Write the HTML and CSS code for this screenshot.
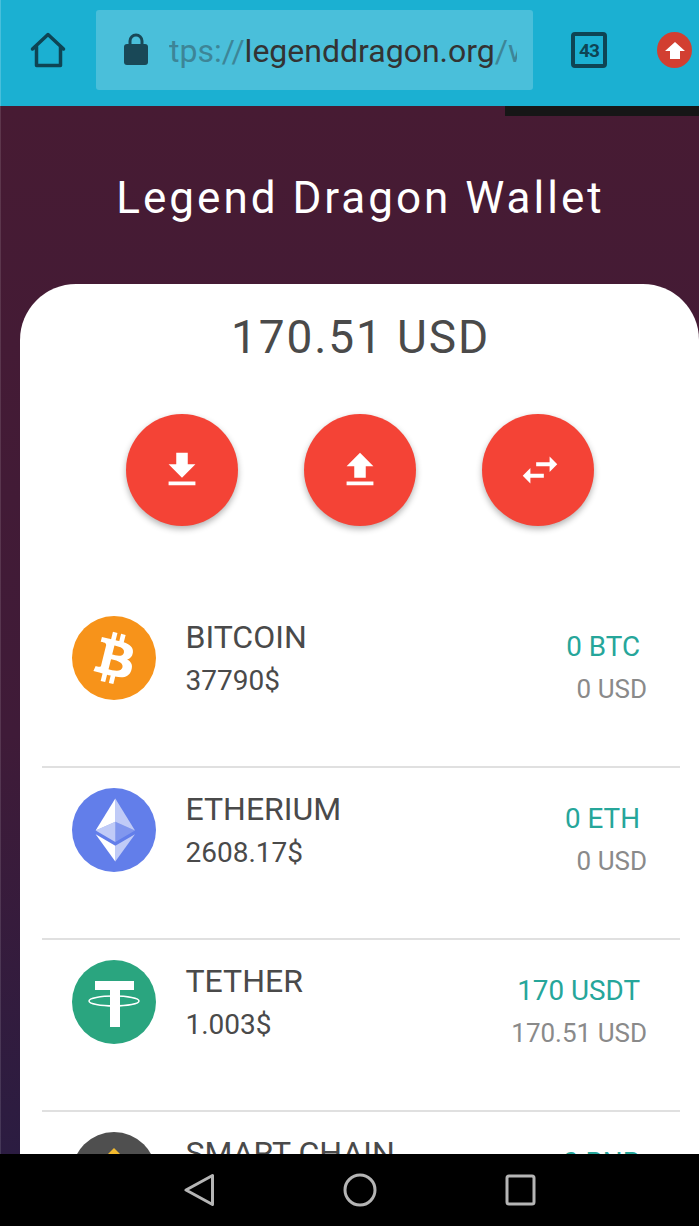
FILE: index.html
```html
<!DOCTYPE html>
<html lang="en">
<head>
    <meta charset="UTF-8">
    <title>Legend Dragon Wallet</title>
    <link rel="stylesheet" href="styles.css">
</head>
<body>
    <div class="phone">
        <header class="toolbar">
            <svg class="home-icon" viewBox="0 0 36 36">
                <path d="M2.500 17 18 2.500 33.500 17M6.500 14.500V33.500H30.500V14.500" fill="none" stroke="#0e4454" stroke-width="3.500" stroke-linejoin="round" stroke-linecap="round"/>
            </svg>
            <div class="url-box">
                <svg class="lock-icon" viewBox="0 0 24 32">
                    <path d="M6 12V8a6 6 0 0 1 12 0V12" fill="none" stroke="#194857" stroke-width="3"/>
                    <rect x="0" y="11" width="24" height="21" rx="3" fill="#194857"/>
                </svg>
                <div class="url-text"><span class="url-dim">tps://</span>legenddragon.org<span class="url-dim">/wallet</span></div>
            </div>
            <div class="tab-count">43</div>
            <div class="update-badge">
                <svg viewBox="0 0 20 17" class="update-arrow"><path d="M10 0 20 9H15V17H5V9H0z" fill="#fff"/></svg>
            </div>
        </header>

        <main class="page">
            <div class="top-strip"></div>
            <h1 class="title">Legend Dragon Wallet</h1>

            <section class="card">
                <div class="total">170.51 USD</div>

                <div class="actions">
                    <button class="round-btn">
                        <svg viewBox="0 0 24 24"><path d="M19 9h-4V3H9v6H5l7 7 7-7zM5 18v2h14v-2H5z"/></svg>
                    </button>
                    <button class="round-btn">
                        <svg viewBox="0 0 24 24"><path d="M9 16h6v-6h4l-7-7-7 7h4zm-4 2h14v2H5z"/></svg>
                    </button>
                    <button class="round-btn swap-btn">
                        <svg viewBox="0 0 24 24"><path d="M6.990 11 3 15l3.990 4v-3H14v-2H6.990v-3zM21 9l-4-4v3h-7v2h7v3l4-4z"/></svg>
                    </button>
                </div>

                <ul class="coins">
                    <li class="coin">
                        <svg class="coin-icon" viewBox="0 0 32 32">
                            <circle cx="16" cy="16" r="16" fill="#f7931a"/>
                            <path fill="#fff" d="M23.189 14.020c.314-2.096-1.283-3.223-3.465-3.975l.708-2.840-1.728-.430-.690 2.765c-.454-.114-.920-.220-1.385-.326l.695-2.783L15.596 6l-.708 2.839c-.376-.086-.746-.170-1.104-.260l.002-.009-2.384-.595-.460 1.846s1.283.294 1.256.312c.700.175.826.638.805 1.006l-.806 3.235c.048.012.110.030.180.057l-.183-.045-1.130 4.532c-.086.212-.303.531-.793.410.018.025-1.256-.313-1.256-.313l-.858 1.978 2.250.561c.418.105.828.215 1.231.318l-.715 2.872 1.727.430.708-2.840c.472.127.930.245 1.378.357l-.706 2.828 1.728.430.715-2.866c2.948.558 5.164.333 6.097-2.333.752-2.146-.037-3.385-1.588-4.192 1.130-.260 1.980-1.003 2.207-2.538zm-3.950 5.538c-.533 2.147-4.148.986-5.320.695l.950-3.805c1.172.293 4.929.872 4.370 3.110zm.535-5.569c-.487 1.953-3.495.960-4.470.717l.860-3.450c.975.243 4.118.696 3.610 2.733z"/>
                        </svg>
                        <div class="coin-info">
                            <div class="coin-name">BITCOIN</div>
                            <div class="coin-price">37790$</div>
                        </div>
                        <div class="coin-amounts">
                            <div class="coin-balance">0 BTC</div>
                            <div class="coin-usd">0 USD</div>
                        </div>
                    </li>
                    <li class="coin">
                        <svg class="coin-icon" viewBox="0 0 32 32">
                            <circle cx="16" cy="16" r="16" fill="#627eea"/>
                            <g fill="#fff">
                                <path fill-opacity=".6" d="M16.498 4v8.870l7.497 3.350z"/>
                                <path d="M16.498 4 9 16.220l7.498-3.350z"/>
                                <path fill-opacity=".6" d="M16.498 21.968v6.027L24 17.616z"/>
                                <path d="M16.498 27.995v-6.028L9 17.616z"/>
                                <path fill-opacity=".2" d="m16.498 20.573 7.497-4.353-7.497-3.348z"/>
                                <path fill-opacity=".6" d="m9 16.220 7.498 4.353v-7.701z"/>
                            </g>
                        </svg>
                        <div class="coin-info">
                            <div class="coin-name">ETHERIUM</div>
                            <div class="coin-price">2608.17$</div>
                        </div>
                        <div class="coin-amounts">
                            <div class="coin-balance">0 ETH</div>
                            <div class="coin-usd">0 USD</div>
                        </div>
                    </li>
                    <li class="coin">
                        <svg class="coin-icon" viewBox="0 0 84 84">
                            <circle cx="42" cy="42" r="42" fill="#2aa57f"/>
                            <path fill="#fff" d="M23 21h39v9H48v37H38V30H23z"/>
                            <ellipse cx="42" cy="41" rx="25" ry="5" fill="none" stroke="#fff" stroke-width="1.500"/>
                        </svg>
                        <div class="coin-info">
                            <div class="coin-name">TETHER</div>
                            <div class="coin-price">1.003$</div>
                        </div>
                        <div class="coin-amounts">
                            <div class="coin-balance">170 USDT</div>
                            <div class="coin-usd">170.51 USD</div>
                        </div>
                    </li>
                    <li class="coin">
                        <svg class="coin-icon" viewBox="0 0 84 84">
                            <circle cx="42" cy="42" r="42" fill="#4f4f4f"/>
                            <path fill="#f3ba2f" d="M42 16 55 29 42 42 29 29z"/>
                        </svg>
                        <div class="coin-info">
                            <div class="coin-name">SMART CHAIN</div>
                            <div class="coin-price">0$</div>
                        </div>
                        <div class="coin-amounts">
                            <div class="coin-balance">0 BNB</div>
                            <div class="coin-usd">0 USD</div>
                        </div>
                    </li>
                </ul>
            </section>
        </main>

        <nav class="navbar">
            <svg class="nav-icon" viewBox="0 0 31 34">
                <path d="M28.500 2.500v29L2 17z" fill="none" stroke="#b5b5b5" stroke-width="3" stroke-linejoin="round"/>
            </svg>
            <svg class="nav-icon nav-circle" viewBox="0 0 34 34">
                <circle cx="17" cy="17" r="15" fill="none" stroke="#b5b5b5" stroke-width="3"/>
            </svg>
            <svg class="nav-icon" viewBox="0 0 31 34">
                <rect x="2" y="3" width="27" height="28" rx="2" fill="none" stroke="#b5b5b5" stroke-width="3"/>
            </svg>
        </nav>
    </div>
</body>
</html>
```

FILE: styles.css
```css
* {
    box-sizing: border-box;
}

body {
    margin: 0;
    font-family: Roboto, "Liberation Sans", sans-serif;
    background-color: #000;
}

.phone {
    display: flex;
    flex-direction: column;
    width: 699px;
    height: 1226px;
    overflow: hidden;
}

.toolbar {
    display: flex;
    align-items: center;
    flex: 0 0 106px;
    padding: 0 7px 6px 30px;
    background-color: #1bb0d2;
    box-shadow: inset 1px 0 rgba(255, 255, 255, 0.2);
}

.home-icon {
    width: 36px;
    height: 36px;
}

.url-box {
    display: flex;
    align-items: center;
    width: 437px;
    height: 80px;
    margin-left: 30px;
    padding: 0 16px 0 28px;
    background-color: #4abfda;
    border-radius: 3px;
}

.lock-icon {
    flex: none;
    width: 24px;
    height: 32px;
    margin-bottom: 2px;
}

.url-text {
    margin-left: 21px;
    padding-top: 2px;
    overflow: hidden;
    white-space: nowrap;
    font-size: 32px;
    color: #333;
}

.url-dim {
    color: #3d8597;
}

.tab-count {
    display: flex;
    align-items: center;
    justify-content: center;
    flex: none;
    width: 36px;
    height: 36px;
    margin-left: 38px;
    border: 4px solid #0e4454;
    border-radius: 4px;
    font-size: 19px;
    font-weight: 700;
    letter-spacing: -1px;
    color: #0e4454;
}

.update-badge {
    display: flex;
    align-items: center;
    justify-content: center;
    flex: none;
    width: 35px;
    height: 36px;
    margin-left: auto;
    background-color: #d23f31;
    border-radius: 50%;
}

.update-arrow {
    width: 20px;
    height: 17px;
}

.page {
    position: relative;
    flex: 1;
    min-height: 0;
    overflow: hidden;
    padding-left: 20px;
    background: linear-gradient(180deg, #471b33 0%, #3f1b38 60%, #2b1c41 100%);
    box-shadow: inset 1px 0 rgba(255, 255, 255, 0.12);
}

.top-strip {
    position: absolute;
    top: 0;
    right: 0;
    width: 194px;
    height: 10px;
    background-color: #161616;
}

.title {
    margin: 0;
    padding: 65px 0 0 2px;
    height: 178px;
    text-align: center;
    font-size: 44px;
    font-weight: 400;
    line-height: 54px;
    letter-spacing: 3px;
    color: #fff;
}

.card {
    padding-top: 26px;
    background-color: #fff;
    border-radius: 56px 56px 0 0;
}

.total {
    padding-left: 2px;
    text-align: center;
    font-size: 46px;
    line-height: 54px;
    letter-spacing: 1.900px;
    color: #4a4a4a;
}

.actions {
    display: flex;
    gap: 66px;
    margin-top: 50px;
    padding-left: 106px;
}

.round-btn {
    display: flex;
    align-items: center;
    justify-content: center;
    width: 112px;
    height: 112px;
    padding: 0;
    border: none;
    border-radius: 50%;
    background-color: #f44336;
    box-shadow: 0 3px 6px rgba(0, 0, 0, 0.3);
}

.round-btn svg {
    width: 46px;
    height: 46px;
    fill: #fff;
}

.swap-btn svg {
    margin-left: 4px;
}

.coins {
    margin: 70px 19px 0 22px;
    padding: 0;
    list-style: none;
}

.coin {
    display: flex;
    align-items: flex-start;
    height: 172px;
    padding: 20px 33px 0 30px;
    border-bottom: 2px solid #e0e0e0;
}

.coin-icon {
    flex: none;
    width: 84px;
    height: 84px;
}

.coin-info {
    flex: 1;
    margin-left: 29.500px;
    color: #4a4a4a;
}

.coin-name {
    font-size: 32px;
    line-height: 43px;
}

.coin-price {
    font-size: 28px;
    line-height: 43px;
}

.coin-amounts {
    display: flex;
    flex-direction: column;
    align-items: flex-end;
    padding-top: 10px;
}

.coin-balance {
    padding-right: 7px;
    font-size: 27.800px;
    line-height: 42px;
    color: #26a69a;
}

.coin-usd {
    font-size: 26px;
    line-height: 42px;
    color: #8a8a8a;
}

.navbar {
    display: flex;
    align-items: center;
    justify-content: center;
    gap: 128px;
    flex: 0 0 72px;
    padding-left: 20px;
    background-color: #000;
}

.nav-icon {
    height: 34px;
    width: 31px;
}

.nav-circle {
    width: 34px;
}
```
